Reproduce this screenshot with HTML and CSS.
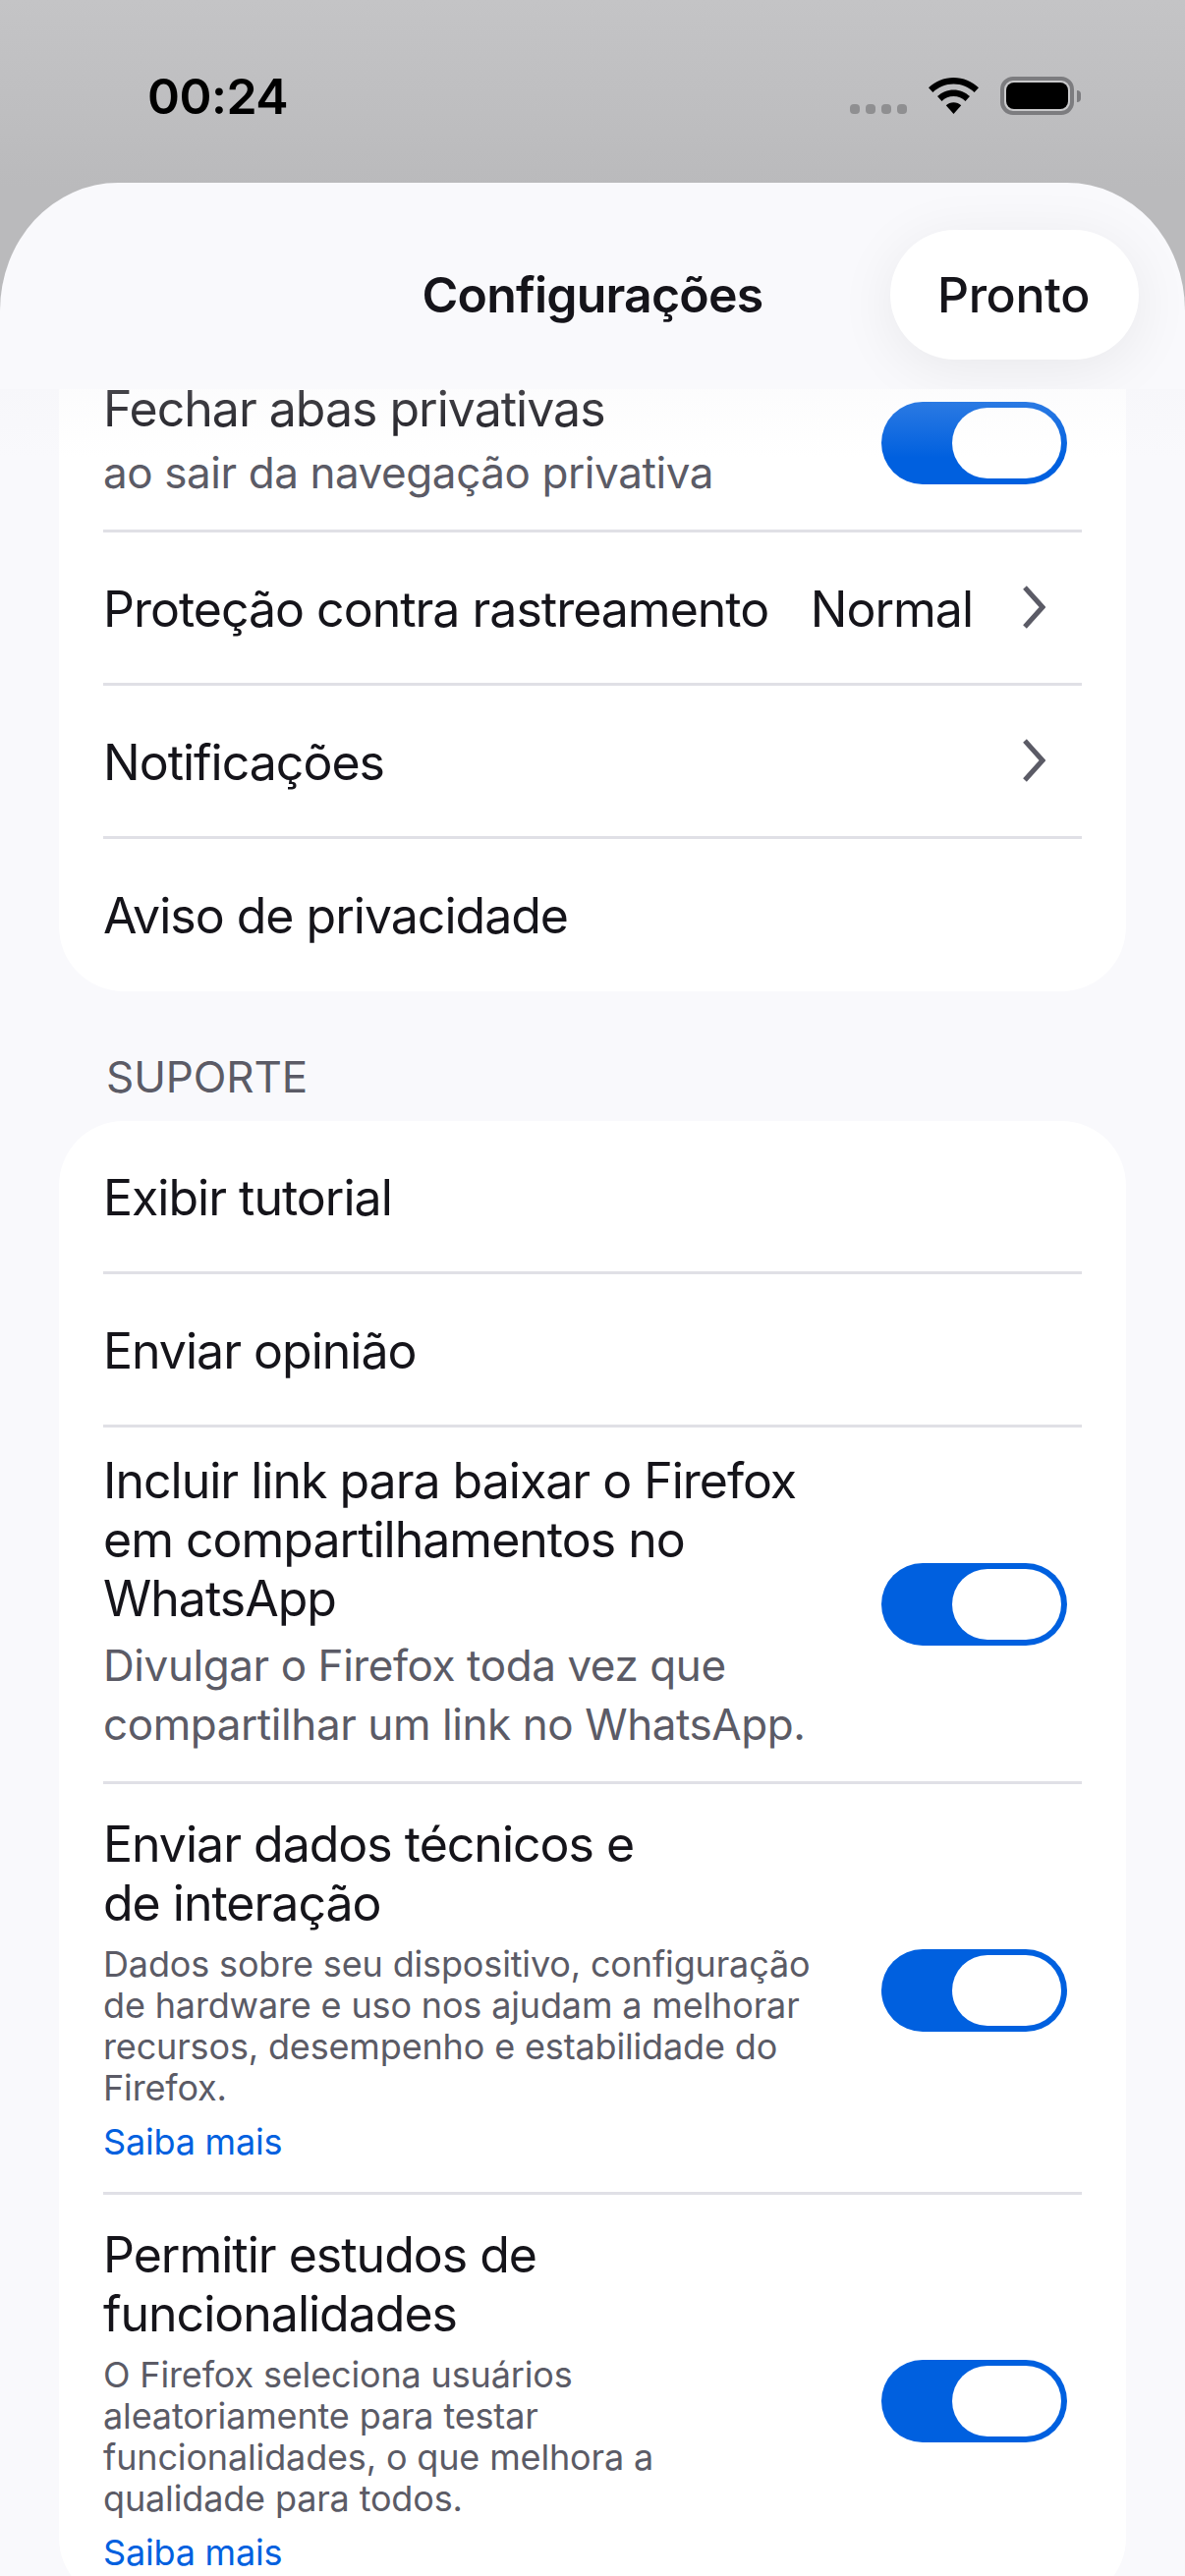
FILE: index.html
```html
<!DOCTYPE html>
<html lang="pt-BR">
<head>
<meta charset="utf-8">
<title>Configurações</title>
<link rel="stylesheet" href="styles.css">
</head>
<body>
<div class="status">
  <span class="time">00:24</span>
  <div class="status-icons">
    <div class="dots"><i></i><i></i><i></i><i></i></div>
    <svg class="wifi" width="51" height="37" viewBox="0 0 51 37"><path d="M25.5 0C15.6 0 6.8 3.8 0 10.2l4.4 4.7C10 9.7 17.3 6.5 25.5 6.5s15.500 3.200 21.100 8.400L51 10.200C44.200 3.800 35.400 0 25.500 0z"/><path d="M25.500 12.500c-6.400 0-12.100 2.500-16.500 6.600l4.500 4.800c3.200-3 7.400-4.800 12-4.800s8.800 1.800 12 4.800l4.500-4.800c-4.400-4.100-10.100-6.600-16.500-6.600z"/><path d="M25.500 25.200c-3 0-5.600 1.100-7.700 3L25.500 37l7.700-8.800c-2.100-1.900-4.700-3-7.700-3z"/></svg>
    <div class="battery"><div class="battery-fill"></div></div>
    <div class="battery-nub"></div>
  </div>
</div>
<main class="sheet">
  <header class="nav">
    <span></span>
    <h1 class="nav-title">Configurações</h1>
    <div class="nav-action"><button class="done">Pronto</button></div>
  </header>
  <div class="scroll">
    <div class="fade"></div>
    <section class="card card-first">
      <div class="row row-sub">
        <div class="text">
          <div class="title">Fechar abas privativas</div>
          <div class="sub sub-tight">ao sair da navegação privativa</div>
        </div>
        <div class="toggle"><div class="thumb"></div></div>
      </div>
      <div class="row row-single">
        <div class="text"><div class="title">Proteção contra rastreamento</div></div>
        <span class="value">Normal</span>
        <svg class="chev" width="24" height="44" viewBox="0 0 24 44"><path d="M3 2l18 20L3 42" /></svg>
      </div>
      <div class="row row-single">
        <div class="text"><div class="title">Notificações</div></div>
        <svg class="chev" width="24" height="44" viewBox="0 0 24 44"><path d="M3 2l18 20L3 42" /></svg>
      </div>
      <div class="row row-single">
        <div class="text"><div class="title">Aviso de privacidade</div></div>
      </div>
    </section>
    <h2 class="section">SUPORTE</h2>
    <section class="card">
      <div class="row row-single">
        <div class="text"><div class="title">Exibir tutorial</div></div>
      </div>
      <div class="row row-single">
        <div class="text"><div class="title">Enviar opinião</div></div>
      </div>
      <div class="row row-sub">
        <div class="text">
          <div class="title">Incluir link para baixar o Firefox<br>em compartilhamentos no<br>WhatsApp</div>
          <div class="sub">Divulgar o Firefox toda vez que<br>compartilhar um link no WhatsApp.</div>
        </div>
        <div class="toggle"><div class="thumb"></div></div>
      </div>
      <div class="row row-desc">
        <div class="text">
          <div class="title">Enviar dados técnicos e<br>de interação</div>
          <div class="desc">Dados sobre seu dispositivo, configuração<br>de hardware e uso nos ajudam a melhorar<br>recursos, desempenho e estabilidade do<br>Firefox.</div>
          <a class="link">Saiba mais</a>
        </div>
        <div class="toggle"><div class="thumb"></div></div>
      </div>
      <div class="row row-desc">
        <div class="text">
          <div class="title">Permitir estudos de<br>funcionalidades</div>
          <div class="desc">O Firefox seleciona usuários<br>aleatoriamente para testar<br>funcionalidades, o que melhora a<br>qualidade para todos.</div>
          <a class="link">Saiba mais</a>
        </div>
        <div class="toggle"><div class="thumb"></div></div>
      </div>
    </section>
  </div>
</main>
</body>
</html>
```
FILE: styles.css
```css
* { box-sizing: border-box; }
html, body { margin: 0; padding: 0; height: 2622px; overflow: hidden; }
body {
  display: flex;
  flex-direction: column;
  font-family: "Inter", "Liberation Sans", sans-serif;
  color: #15141a;
  background: linear-gradient(#c4c4c6 0, #bababc 190px, #bababc 100%);
}
.status {
  flex: 0 0 186px;
  display: flex;
  justify-content: space-between;
  padding: 68px 106px 0 150px;
}
.time { font-size: 50px; line-height: 60px; font-weight: 600; color: #000; letter-spacing: -0.5px; }
.status-icons { display: flex; align-items: flex-start; padding-top: 10px; }
.dots { display: flex; gap: 6px; margin-top: 28px; margin-right: 22px; }
.dots i { display: block; width: 10px; height: 10px; border-radius: 4px; background: #8f8f91; }
.wifi { fill: #000; margin-top: 1px; margin-right: 22px; }
.battery {
  width: 75px; height: 39px;
  border: 4px solid #7c7c7f;
  border-radius: 13px;
  padding: 2px;
  background: #c9c9cb;
}
.battery-fill { width: 100%; height: 100%; background: #000; border-radius: 8px; }
.battery-nub { width: 4px; height: 12px; margin: 14px 0 0 3px; background: #7c7c7f; border-radius: 0 6px 6px 0; }

.sheet {
  flex: 1;
  min-height: 0;
  display: flex;
  flex-direction: column;
  background: #f9f9fc;
  border-radius: 120px 120px 0 0 / 130px 130px 0 0;
  overflow: hidden;
}
.nav {
  flex: 0 0 210px;
  display: grid;
  grid-template-columns: 1fr auto 1fr;
  align-items: center;
  padding: 48px 47px 30px;
  overflow: hidden;
}
.nav-title { margin: 0; font-size: 50px; line-height: 60px; font-weight: 600; letter-spacing: -0.8px; }
.nav-action { display: flex; justify-content: flex-end; }
.done {
  width: 253px; height: 132px;
  border: 0; border-radius: 66px;
  background: #fff;
  color: #15141a;
  font: 500 50px/60px "Inter", "Liberation Sans", sans-serif;
  letter-spacing: -0.4px;
  padding: 0 2px 0 0;
  box-shadow: 0 10px 60px rgba(0,0,0,.07);
}
.scroll { position: relative; flex: 1; min-height: 0; overflow: hidden; }
.fade {
  position: absolute; left: 0; right: 0; top: 0; height: 70px; z-index: 2;
  background: linear-gradient(rgba(240,240,244,.22), rgba(245,245,248,0));
}
.card { margin: 0 60px; background: #fff; border-radius: 66px; }
.card-first { margin-top: -100px; padding-top: 66px; }
.card-first .row:last-child { padding-bottom: 47px; }
.section {
  margin: 0; padding: 61px 0 0 108px; height: 132px;
  font-size: 44px; line-height: 52px; font-weight: 400; color: #5b5b66;
  letter-spacing: -0.1px;
}
.row {
  display: flex;
  align-items: center;
  margin: 0 45px;
  border-bottom: 3px solid #e0e0e6;
}
.row:last-child { border-bottom: 0; }
.row-single { padding: 48px 0 45px; }
.row-sub { padding: 24px 0 28px; }
.row-desc { padding: 31px 0 30px; }
.text { flex: 1; min-width: 0; }
.title { font-size: 50px; line-height: 60px; letter-spacing: -1px; }
.sub { font-size: 44px; line-height: 60px; color: #5b5b66; margin-top: 8px; letter-spacing: -0.42px; }
.sub-tight { margin-top: 5px; }
.desc { font-size: 36px; line-height: 42px; color: #5b5b66; margin-top: 11px; letter-spacing: -0.15px; }
.link { display: block; margin-top: 13px; font-size: 36px; line-height: 42px; color: #0060df; letter-spacing: -0.2px; }
.value { font-size: 50px; line-height: 60px; letter-spacing: -1px; }
.chev { fill: none; stroke: #5b5b66; stroke-width: 5; margin: 0 37px 5px 50px; }
.toggle {
  flex: 0 0 189px; height: 84px;
  margin: 4px 15px 0 0;
  padding: 6px;
  border-radius: 42px;
  background: #0060df;
  display: flex;
  justify-content: flex-end;
}
.thumb { width: 111px; height: 72px; border-radius: 36px; background: #fff; }
```
